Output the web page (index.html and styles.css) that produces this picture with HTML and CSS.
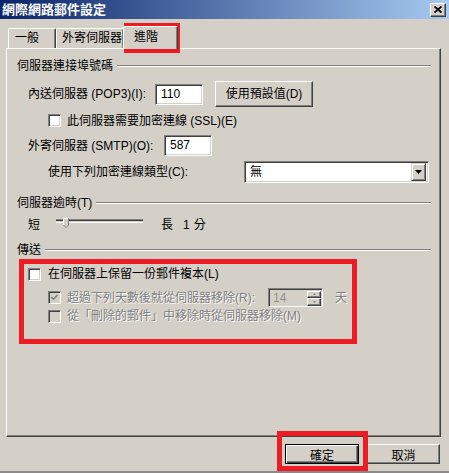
FILE: index.html
```html
<!DOCTYPE html>
<html lang="zh-Hant">
<head>
    <meta charset="UTF-8">
    <meta name="viewport" content="width=device-width, initial-scale=1.0">
    <title>網際網路郵件設定</title>
    <link rel="stylesheet" href="styles.css">
</head>
<body>
    <div class="window">
        <div class="titlebar">
            <span class="title">網際網路郵件設定</span>
            <div class="close-btn">
                <svg width="8" height="7" viewBox="0 0 8 7">
                    <path d="M0.5 0.5 L7.5 6.5 M7.5 0.5 L0.5 6.5" stroke="#000" stroke-width="1.8" fill="none"/>
                </svg>
            </div>
        </div>

        <div class="tabs">
            <div class="tab tab-general">一般</div>
            <div class="tab tab-outgoing">外寄伺服器</div>
            <div class="tab tab-advanced active">進階</div>
        </div>

        <div class="panel">
            <!-- server port numbers -->
            <div class="group-head"><span>伺服器連接埠號碼</span><i class="rule"></i></div>

            <div class="row row-pop3">
                <span class="label label-pop3">內送伺服器 (POP3)(I):</span>
                <div class="textbox textbox-port">110</div>
                <div class="btn btn-defaults">使用預設值(D)</div>
            </div>

            <div class="row row-ssl">
                <span class="checkbox"></span>
                <span class="cb-text">此伺服器需要加密連線 (SSL)(E)</span>
            </div>

            <div class="row row-smtp">
                <span class="label label-smtp">外寄伺服器 (SMTP)(O):</span>
                <div class="textbox textbox-port">587</div>
            </div>

            <div class="row row-enc">
                <span class="label label-enc">使用下列加密連線類型(C):</span>
                <div class="select">
                    <span class="select-value">無</span>
                    <span class="select-arrow">
                        <svg width="7" height="4" viewBox="0 0 7 4"><path d="M0 0 H7 L3.5 4 Z" fill="#000"/></svg>
                    </span>
                </div>
            </div>

            <!-- timeout -->
            <div class="group-head group-timeout"><span>伺服器逾時(T)</span><i class="rule"></i></div>

            <div class="row row-slider">
                <span class="slider-short">短</span>
                <div class="track">
                    <svg class="thumb" width="6" height="10" viewBox="0 0 6 10">
                        <path d="M0.5 0.5 H5.5 V7 L3 9.5 L0.5 7 Z" fill="#d4d0c8" stroke="#808080"/>
                        <path d="M0.5 7 V0.5 H5" fill="none" stroke="#fff"/>
                    </svg>
                </div>
                <span class="slider-long">長</span>
                <span class="slider-num">1</span>
                <span class="slider-unit">分</span>
            </div>

            <!-- delivery -->
            <div class="group-head group-send"><span>傳送</span><i class="rule"></i></div>

            <div class="row row-keep">
                <span class="checkbox"></span>
                <span class="cb-text">在伺服器上保留一份郵件複本(L)</span>
            </div>

            <div class="row row-days">
                <span class="checkbox disabled">
                    <svg width="7" height="7" viewBox="0 0 7 7"><path d="M0.5 3 L2.5 5.2 L6.5 1" stroke="#808080" stroke-width="1.6" fill="none"/></svg>
                </span>
                <span class="cb-text dim days-text">超過下列天數後就從伺服器移除(R):</span>
                <div class="spin">
                    <span class="spin-value">14</span>
                    <span class="spin-btns">
                        <span class="spin-btn"><svg width="3" height="2" viewBox="0 0 3 2"><path d="M1.5 0 L3 2 H0 Z" fill="#808080"/></svg></span>
                        <span class="spin-btn"><svg width="3" height="2" viewBox="0 0 3 2"><path d="M0 0 H3 L1.5 2 Z" fill="#808080"/></svg></span>
                    </span>
                </div>
                <span class="days-unit dim">天</span>
            </div>

            <div class="row row-deleted">
                <span class="checkbox disabled"></span>
                <span class="cb-text dim">從「刪除的郵件」中移除時從伺服器移除(M)</span>
            </div>
        </div>

        <div class="footer">
            <div class="btn btn-ok">確定</div>
            <div class="btn btn-cancel">取消</div>
        </div>

        <!-- red annotation boxes -->
        <div class="mark mark-tab"></div>
        <div class="mark mark-send"></div>
        <div class="mark mark-ok"></div>
    </div>
</body>
</html>
```

FILE: styles.css
```css
html, body {
margin: 0;
}

body {
background: #d4d0c8;
font-family: "Liberation Sans", "Noto Sans CJK TC", sans-serif;
font-size: 12px;
color: #000;
}

.window {
position: relative;
width: 449px;
height: 473px;
box-sizing: border-box;
border-bottom: 2px solid #8a8a8a;
}

/* title bar */
.titlebar {
height: 19px;
display: flex;
align-items: center;
justify-content: space-between;
padding: 0 3px 0 2px;
background: linear-gradient(to right, #0a246a, #a6caf0);
}

.title {
color: #fff;
font-weight: bold;
font-size: 13px;
line-height: 19px;
}

.close-btn {
width: 16px;
height: 14px;
box-sizing: border-box;
display: flex;
align-items: center;
justify-content: center;
background: #d4d0c8;
border: 1px solid;
border-color: #fff #404040 #404040 #fff;
box-shadow: inset -1px -1px #808080;
}

/* tabs */
.tabs {
height: 29px;
box-sizing: border-box;
padding-left: 8px;
display: flex;
align-items: flex-end;
}

.tab {
height: 20px;
box-sizing: border-box;
line-height: 19px;
border-top: 1px solid #fff;
border-left: 1px solid #fff;
border-right: 1px solid #404040;
box-shadow: inset -1px 0 #808080;
border-top-left-radius: 2px;
border-top-right-radius: 2px;
}

.tab-general {
width: 48px;
padding-left: 6px;
}

.tab-outgoing {
width: 68px;
padding-left: 5px;
}

.tab-advanced {
position: relative;
z-index: 1;
width: 55px;
height: 23px;
margin-left: -1px;
margin-bottom: -1px;
padding-left: 10px;
line-height: 21px;
background: #d4d0c8;
}

/* tab page */
.panel {
width: 435px;
height: 389px;
margin-left: 6px;
box-sizing: border-box;
padding: 9px 9px 0 10px;
border-top: 1px solid #fff;
border-left: 1px solid #fff;
border-right: 1px solid #404040;
border-bottom: 1px solid #404040;
box-shadow: inset -1px -1px #808080;
}

.group-head {
height: 16px;
line-height: 16px;
display: flex;
align-items: center;
}

.group-head span {
padding-right: 4px;
}

.rule {
flex: 1;
border-top: 1px solid #808080;
border-bottom: 1px solid #fff;
}

.group-timeout {
margin-top: 12px;
}

.group-send {
margin-top: 9px;
}

.row {
display: flex;
align-items: center;
line-height: 16px;
}

.label {
flex: none;
}

.row-pop3 {
height: 26px;
margin-top: 7px;
padding-left: 11px;
}

.label-pop3 {
width: 127px;
}

.row-ssl {
height: 13px;
margin-top: 7px;
padding-left: 31px;
}

.row-smtp {
height: 21px;
margin-top: 8px;
padding-left: 11px;
}

.label-smtp {
width: 136px;
}

.row-enc {
height: 22px;
margin-top: 5px;
padding-left: 31px;
}

.label-enc {
width: 196px;
}

/* sunken fields */
.textbox,
.select,
.spin {
box-sizing: border-box;
border: 1px solid;
border-color: #808080 #fff #fff #808080;
box-shadow: inset 1px 1px #404040, inset -1px -1px #d4d0c8;
background: #fff;
}

.textbox-port {
width: 48px;
height: 21px;
padding-left: 5px;
line-height: 19px;
}

.btn {
box-sizing: border-box;
display: flex;
align-items: center;
justify-content: center;
background: #d4d0c8;
border: 1px solid;
border-color: #fff #404040 #404040 #fff;
box-shadow: inset -1px -1px #808080;
}

.btn-defaults {
width: 98px;
height: 26px;
margin-left: 12px;
}

.select {
width: 185px;
height: 22px;
display: flex;
align-items: center;
justify-content: space-between;
padding: 2px;
}

.select-value {
padding-left: 3px;
}

.select-arrow {
width: 15px;
height: 18px;
box-sizing: border-box;
display: flex;
align-items: center;
justify-content: center;
background: #d4d0c8;
border: 1px solid;
border-color: #d4d0c8 #404040 #404040 #d4d0c8;
box-shadow: inset 1px 1px #fff, inset -1px -1px #808080;
}

/* slider */
.row-slider {
height: 16px;
margin-top: 6px;
padding-left: 11px;
}

.track {
position: relative;
width: 87px;
height: 4px;
margin: 0 18px 0 16px;
align-self: flex-start;
margin-top: 2px;
box-sizing: border-box;
border-top: 1px solid #808080;
border-bottom: 1px solid #fff;
background: #404040;
box-shadow: inset 0 -1px #d4d0c8;
}

.thumb {
position: absolute;
left: 7px;
top: -2px;
}

.slider-num {
margin-left: 10px;
}

.slider-unit {
margin-left: 4px;
}

/* checkboxes */
.checkbox {
flex: none;
width: 13px;
height: 13px;
box-sizing: border-box;
display: flex;
align-items: center;
justify-content: center;
border: 1px solid;
border-color: #808080 #fff #fff #808080;
box-shadow: inset 1px 1px #404040, inset -1px -1px #d4d0c8;
background: #fff;
}

.checkbox.disabled {
background: #d4d0c8;
}

.cb-text {
margin-left: 6px;
}

.dim {
color: #808080;
text-shadow: 1px 1px 0 #fff;
}

.row-keep {
height: 16px;
margin-top: 8px;
padding-left: 11px;
}

.row-keep .cb-text {
margin-left: 7px;
}

.row-days {
height: 19px;
margin-top: 6px;
padding-left: 31px;
}

.days-text {
width: 201px;
}

.spin {
width: 55px;
height: 19px;
display: flex;
align-items: center;
justify-content: space-between;
padding: 2px 1px 1px 2px;
background: #d4d0c8;
}

.spin-value {
padding-left: 2px;
color: #909090;
}

.spin-btns {
display: flex;
flex-direction: column;
width: 14px;
height: 15px;
}

.spin-btn {
flex: 1;
display: flex;
align-items: center;
justify-content: center;
box-sizing: border-box;
border: 1px solid;
border-color: #fff #404040 #404040 #fff;
box-shadow: inset -1px -1px #808080;
}

.days-unit {
margin-left: 12px;
}

.row-deleted {
height: 16px;
margin-top: 1px;
padding-left: 31px;
}

/* dialog buttons */
.footer {
display: flex;
justify-content: flex-end;
gap: 8px;
padding: 7px 9px 0 0;
}

.btn-ok,
.btn-cancel {
height: 20px;
}

.btn-ok {
width: 74px;
border: 1px solid #000;
box-shadow: inset 1px 1px #fff, inset -1px -1px #404040, inset -2px -2px #808080;
}

.btn-cancel {
width: 73px;
}

/* annotation overlays */
.mark {
position: absolute;
box-sizing: border-box;
border: 5px solid #ed1c24;
}

.mark-tab {
left: 124px;
top: 23px;
width: 56px;
height: 30px;
}

.mark-send {
left: 19px;
top: 259px;
width: 338px;
height: 85px;
}

.mark-ok {
left: 277px;
top: 431px;
width: 91px;
height: 40px;
}
```
